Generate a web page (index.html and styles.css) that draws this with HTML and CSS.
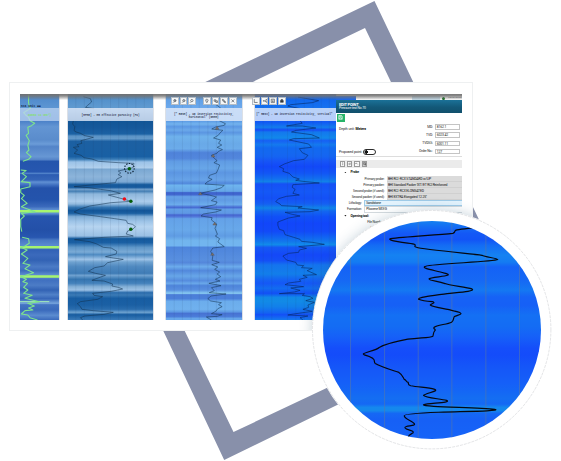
FILE: index.html
```html
<!DOCTYPE html>
<html lang="en">
<head>
<meta charset="utf-8">
<title>Well log viewer</title>
<link rel="stylesheet" href="styles.css">
</head>
<body>
<main class="stage">
  <svg class="frame" viewBox="0 0 561 461"><path fill="#8890aa" fill-rule="evenodd" d="M374.500 1 L524 313.800 L224.200 460 L75.300 144.300Z M365 28 L499 306.800 L233.500 432 L100 155.400Z"/></svg>

  <section class="window">
    <div class="screen">
      <div class="track gamma">
        <svg class="log" viewBox="56 282 110 678" preserveAspectRatio="none" data-stops="282 #4a86ca,322 #5d95d2,362 #4a80c8,380 #6395d3,420 #5a8ccc,432 #6b9cd8,440 #5384c8,470 #6797d4,479 #5584c8,484 #2455ac,516 #2757b0,520 #5486cc,524 #2c5cb2,540 #3565b8,546 #6090d4,556 #3c6cbe,564 #2452aa,600 #2454ac,620 #3b6abc,628 #5b8cd0,641 #5b8cd0,648 #2755ae,690 #2350a8,712 #2857b0,720 #4878c4,736 #5a8bd0,750 #3262b6,765 #3b6abc,780 #3262b4,800 #4b7bc6,812 #3c6cbc,826 #6090d2,840 #4070c0,856 #4c7cc6,870 #3262b4,884 #5081c8,896 #3666b8,910 #76a4dc,914 #4474c2,930 #3a6abc,946 #5b8cd0,960 #3a6abc">
          <path class="bars" d="M56 634H166M56 742H166M56 829.500H166"/><path class="bar-pale" d="M56 905H138"/>
          <path class="green" d="M80 282V310L85 325 78 330 66 338 72 345 80 352 84 362 97 370 88 377 78 382 80 400 73 406 82 422 78 436 81 450 74 458 87 470 80 478 64 484M58 510 73 512 62 520 74 530 60 545 84 548 84 560 58 567 58 578 68 586 60 596 76 610 60 620 98 635 60 640 68 648 58 658 58 680 61 695M62 712 80 716 82 730 70 738 58 742 76 750 60 762 78 775 64 790 84 795 70 806 94 818 58 830 74 838 64 845 77 850 66 862 78 870 66 880 90 886 70 895 110 905 78 910 96 918 80 924 92 930 70 932 60 942 78 945 84 953 105 960"/>
        </svg>
        <p class="label top">Sta unit ■■</p>
        <p class="head">Gamma to 150°)</p>
      </div>

      <div class="track porosity">
        <svg class="log" viewBox="189 282 239 678" preserveAspectRatio="none" data-stops="282 #4a8ac8,322 #5f9ad0,362 #115596,385 #16599c,402 #1b62a4,408 #5b93c6,416 #6299ca,424 #1c60a2,470 #1960a4,478 #3c7eb8,486 #9cc3e8,503 #b0cfec,508 #7ba8d2,530 #8cb4da,546 #7ba8d4,554 #165a9c,562 #175a9e,568 #719fcb,574 #4781b6,582 #8eb7dc,604 #abccec,612 #92bade,622 #3576b2,632 #125598,640 #1b60a2,650 #7eacd6,665 #9fc5e8,680 #b6d4f0,708 #9ac0e4,716 #155a9c,728 #1b60a4,742 #5f97c9,756 #7babd6,764 #4f8bc2,778 #9fc4e8,786 #6fa2d0,800 #4f89c0,820 #3f7cb6,826 #70a2d0,838 #3575b0,850 #4482bc,860 #83afd6,870 #9cc2e6,878 #2a6cac,885 #3b7bb6,895 #175da2,915 #1b60a4,928 #2a6dae,937 #6ea2d0,944 #175ca0,960 #3b7bb8">
          <path class="grid" d="M211 282V960M235 282V960M260 282V960M284 282V960M308 282V960M331 282V960M355 282V960M379 282V960M403 282V960"/>
          <path class="line soft" d="M232 290 252 296 255 306 244 316 238 322 262 326M204 362 202 372 208 380 206 392 212 396 224 400 236 407 260 412 240 418 225 422 228 430 214 434 220 440 204 442 216 450 206 460 226 466 234 473 256 477 274 484 330 488 374 490 371 503 330 513 337 519 330 524 340 530 326 537 322 548 262 554 206 560 248 563 280 568 308 572 336 580 302 585 326 592 347 598 365 604 310 608 250 618 220 628 206 636 224 642 280 650 320 656 352 661 356 670 370 673 378 680 370 688 356 693 352 702 372 708 290 712 207 719 250 725 270 732 288 742 310 744 326 754 324 762 294 770 316 774 344 778 300 788 290 798 264 803 246 814 266 820 294 826 268 836 256 841 290 843 314 852 312 858 330 862 342 867 310 874 258 880 262 886 286 890 272 898 224 905 215 911 224 920 228 928 260 932 316 937 290 943 236 948 224 953 230 960"/>
          <ellipse class="halo" cx="361" cy="505" rx="13.500" ry="14.500"/>
          <g fill="#055d0b"><ellipse cx="361" cy="506" rx="5" ry="5.300"/><ellipse cx="365" cy="604" rx="5" ry="5.300"/><ellipse cx="365" cy="688" rx="5" ry="5.300"/></g><ellipse cx="347" cy="597" rx="5" ry="5.300" fill="#f20c13"/>
        </svg>
        <p class="head">[MPHE] - HR effective porosity (PU)</p>
      </div>

      <div class="track horizontal">
        <svg class="log" viewBox="463 282 212 678" preserveAspectRatio="none" data-stops="282 #5a9be2,322 #6ba8ec,364 #5f9ee6,372 #73b3ee,380 #5b98e4,390 #6ba9ea,398 #5b96e2,410 #6fb2ec,432 #69a9e8,446 #6cacea,458 #4f83da,475 #5286dc,484 #609ce4,505 #68a6e8,518 #5c96e2,540 #67a3e8,550 #5188dc,556 #6eb4ee,574 #65a6e8,578 #3d61cc,584 #4268d0,590 #65a0e8,600 #609be4,614 #6cacec,622 #4668d2,628 #619ee6,640 #5f98e4,645 #4564d0,651 #547cdc,656 #64a2e8,690 #68a8ea,708 #5f9ce4,722 #72b5ee,737 #72b5f0,742 #4e85dc,780 #588fdf,788 #5487db,800 #6cacec,812 #5288dc,828 #67a6e8,842 #568cde,850 #6aa8ea,857 #4e84da,870 #588fe0,880 #8accf2,884 #4b7dd8,896 #4b80da,904 #6cadec,928 #70b1ee,936 #5c98e4,940 #4772d2,950 #4b7dda,955 #66a6ea,960 #66a6ea">
          <path class="grid" d="M486 282V960M509 282V960M533 282V960M556 282V960M580 282V960M604 282V960M628 282V960M651 282V960"/>
          <path class="line soft" d="M601 290 610 303 603 314 616 324M612 362 629 371 626 376 602 381 591 387 622 391 614 399 609 406 596 414 616 420 610 430 619 435 606 442 621 449 610 454 605 460 590 466 598 475 606 482 597 488 613 495 608 510 604 519 585 526 582 534 592 538 578 546 572 552 626 556 618 563 600 570 575 576 558 580 584 585 604 591 590 602 606 606 601 614 560 623 618 630 602 636 568 642 561 648 592 653 590 660 605 672 600 685 607 703 601 708 613 716 608 726 626 740 594 744 588 754 594 768 592 781 612 787 591 794 608 801 599 808 613 816 606 822 616 830 601 838 614 843 583 850 617 857 590 863 598 872 584 878 631 882 589 888 580 896 588 903 618 908 610 914 620 920 608 926 602 934 590 941 620 944 606 949 576 951 590 960"/>
          <path class="marks" d="M601 388 606 379 611 388ZM590 471 595 463 600 471ZM554 584 559 576 564 584ZM594 675 599 667 604 675ZM588 766 593 758 598 766Z"/>
        </svg>
        <p class="head">[" RESH] - UG inversion resistivity,<br>horizontal" (OHMM)</p>
      </div>

      <div class="track vertical">
        <svg class="log" viewBox="712 282 227 678" preserveAspectRatio="none" data-stops="282 #0d60ec,322 #1470f0,366 #1158f4,382 #147cec,390 #164cf4,396 #1378ee,414 #1288ea,422 #1760f4,434 #147aee,444 #1268f0,458 #1468f0,470 #1564f2,484 #1654f6,500 #1248f8,520 #1256f5,536 #126ef0,545 #1282e8,552 #1650f6,575 #1458f6,595 #1450f6,612 #1560f2,624 #1184e8,634 #1366f0,650 #1050f7,670 #1246fa,694 #124af8,712 #1164f2,725 #1278ec,734 #118bea,742 #1558f4,765 #1448f8,782 #1450f6,795 #1474ee,822 #127eea,838 #1464f2,850 #1558f6,865 #126cf0,880 #1250f6,892 #1188e8,904 #128ae6,920 #1280ea,938 #1364f2,944 #1450f6,960 #147aee">
          <path class="grid" d="M735 282V960M759 282V960M803 282V960M826 282V960M850 282V960M874 282V960M897 282V960M920 282V960"/>
          <path class="line" d="M832 291 890 302 872 308 812 314 804 318 838 326M838 362 844 370 800 378 844 378 882 384 828 391 814 396 870 404 892 414 820 416 808 420 862 432 870 442 836 446 844 458 860 466 850 478 820 482 794 492 780 500 792 506 790 514 808 520 818 531 836 537 826 541 846 544 892 549 818 554 816 562 824 568 818 580 836 585 800 589 778 596 770 605 782 612 786 617 844 620 832 624 890 630 866 635 796 637 816 643 838 648 806 654 776 666 776 676 780 688 792 692 796 704 820 712 838 718 842 724 872 727 906 733 834 740 856 745 836 750 834 757 806 760 790 768 800 780 826 787 830 795 848 797 842 803 872 805 858 812 884 824 846 826 858 832 836 838 840 844 806 849 796 854 848 860 812 864 838 871 822 876 780 881 850 881 844 886 866 890 874 895 854 902 878 907 860 915 862 922 846 928 872 934 820 942 804 945 860 948 838 953 846 960"/>
        </svg>
        <p class="head">[" RESV] - UG inversion resistivity, vertical"</p>
      </div>

      <div class="corner"><i class="sky"></i><i class="sky b"></i><b></b><em>reference</em></div>
      <div class="shade"></div>
      <div class="tools">
        <span><svg viewBox="0 0 8 8"><path d="M3 5 1.500 6.500M3 5A1.700 1.700 0 1 0 3 2.200 2 2 0 0 0 3 5ZM3.300 3.600H5.300M4.300 2.600V4.600"/></svg></span>
        <span><svg viewBox="0 0 8 8"><path d="M3 5 1.500 6.500M3 5A1.700 1.700 0 1 0 3 2.200 2 2 0 0 0 3 5ZM3.300 3.600H5.300"/></svg></span>
        <span><svg viewBox="0 0 8 8"><path d="M3 5 1.500 6.500M3 5A1.700 1.700 0 1 0 3 2.200 2 2 0 0 0 3 5Z"/></svg></span>
        <span class="gap"><svg viewBox="0 0 8 8"><path d="M4 6.500 2.500 4A1.700 1.700 0 1 1 5.500 4ZM3.500 3H4.500"/></svg></span>
        <span><svg viewBox="0 0 8 8"><path d="M1.500 2.500H4V4.500H1.500ZM4 4H6.500V6.200H4Z"/></svg></span>
        <span><svg viewBox="0 0 8 8"><path d="M2 1.800 4 2.500 4.500 4.500 2.500 4ZM4.300 4.300 6.300 5V6.500L4.500 6Z"/></svg></span>
        <span><svg viewBox="0 0 8 8"><path d="M2 2 6 6M6 2 2 6"/></svg></span>
        <span class="gap2"><svg viewBox="0 0 8 8"><path d="M1.800 1.500V6.200H6.500"/></svg></span>
        <span><svg viewBox="0 0 8 8"><path d="M1.500 4H3.500L6.500 2.200M3.500 4 6.500 5.800M5.500 2.200H6.500V3.200M5.500 5.800H6.500V4.800M2 3.300V4.700"/></svg></span>
        <span><svg viewBox="0 0 8 8"><path d="M1.800 1.600H6.200V6.400H1.800ZM4 2.600V5M3 4.200 4 5.200 5 4.200"/></svg></span>
        <span><svg viewBox="0 0 8 8"><path fill="#333" d="M2 3.500H6V6H2ZM3 2H5V3.500H3Z"/></svg></span>
      </div>

      <aside class="panel">
        <header><strong>EDIT POINT</strong><span>Pressure test No 70</span></header>
        <div class="save"><svg viewBox="0 0 8 8"><path d="M2 1.800H5.400L6.200 2.600V6.200H2ZM3 2V3.200H5V2M3 6V4.500H5.200V6"/></svg></div>
        <div class="point">
          <div class="left"><p>Depth unit: <b>Meters</b></p><p class="switch">Proposed point: <i></i></p></div>
          <div class="right">
            <label>MD: <span>8162.1</span></label><label>TVD: <span>6023.42</span></label><label>TVDSS: <span>6001.11</span></label><label>Order No.: <span>127</span></label>
          </div>
        </div>
        <div class="bar">
          <i><svg viewBox="0 0 6 6"><path d="M2.500 1H3.500M3 1V5M2.300 5H3.700"/></svg></i><i><svg viewBox="0 0 6 6"><path d="M1 3.500 3.200 1.300 5 3 3 5H2ZM2 2.500 4 4"/></svg></i><i><svg viewBox="0 0 6 6"><path d="M1 2.500H3.500L5 4.500M2 1.500 1 2.500 2 3.500"/></svg></i><i class="wide"><svg viewBox="0 0 6 6"><path d="M1 1H4.500V4.500H1ZM1 2.200H4.500M3.500 3.500H5.500V5.500H3.500Z"/></svg></i>
        </div>
        <h3><u></u>Probe</h3>
        <dl>
          <dt>Primary probe:</dt><dd>BHI RCI -RCX STANDARD w/LIP</dd>
          <dt>Primary packer:</dt><dd>BHI Standard Packer 'IXT/ET RCI Reinforced</dd>
          <dt>Second probe (if used):</dt><dd>BHI RCI -RCX ELONGATED</dd>
          <dt>Second packer (if used):</dt><dd>BHI EXTRA Elongated 12.25"</dd>
        </dl>
        <dl class="pick">
          <dt>Lithology:</dt><dd class="on">Sandstone</dd>
          <dt>Formation:</dt><dd>Pliocene MIX-G</dd>
        </dl>
        <h3><u></u>Opening tool:</h3>
        <dl class="files"><dt>File Number:</dt><dd></dd><dt>Start date:</dt><dd></dd></dl>
      </aside>
    </div>
    <div class="glow"></div>
  </section>

  <div class="lens">
    <svg class="ring" viewBox="0 0 240 240"><circle cx="120" cy="120" r="119.500"/></svg>
    <div class="glass">
      <svg class="log" viewBox="903 662 609 655" preserveAspectRatio="none" data-stops="662 #1480f0,680 #146cf4,700 #1458f6,718 #1254f6,735 #146cf4,765 #1582f2,785 #147cf2,800 #1462f6,840 #1668f4,870 #1478f2,890 #1662f6,915 #1660f6,945 #1470f4,980 #146cf4,1010 #1660f8,1045 #154efa,1065 #144cfa,1100 #1556f8,1150 #1560f8,1172 #1466f5,1195 #146ef2,1212 #1568f4,1222 #1588ee,1232 #1588ec,1240 #1568f4,1260 #1660f6,1317 #1664f8">
        <path class="ruler" d="M980 662V1317M1075 662V1317M1169 662V1317M1263 662V1317M1358 662V1317M1452 662V1317"/>
        <path class="trace" d="M1325 682C1305 686 1285 686 1273 690C1269 694 1274 696 1266 699C1220 704 1130 710 1092 715C1084 718 1096 721 1112 724C1134 729 1156 729 1160 733C1163 736 1155 738 1164 741C1180 747 1310 760 1347 765C1356 771 1390 773 1391 778C1380 785 1210 790 1190 798C1172 804 1220 811 1240 818C1284 828 1202 829 1199 836C1201 842 1222 842 1244 850C1255 856 1302 860 1319 866C1332 874 1272 877 1250 880C1220 885 1168 891 1170 897C1178 901 1190 903 1208 904C1222 908 1201 911 1203 915C1208 921 1244 925 1268 932C1306 941 1282 943 1270 949C1266 956 1269 961 1262 966C1250 973 1220 974 1213 982C1210 986 1220 987 1215 992C1211 996 1212 1002 1210 1008C1202 1013 1180 1012 1140 1017C1110 1023 1077 1032 1060 1042C1052 1050 1023 1056 1016 1061C1013 1065 1038 1068 1044 1077C1049 1081 1044 1086 1049 1090C1065 1100 1090 1108 1115 1117C1126 1124 1127 1134 1130 1138C1138 1141 1133 1144 1141 1147C1143 1151 1138 1154 1148 1157C1170 1161 1200 1163 1213 1167C1232 1173 1188 1179 1184 1186C1188 1193 1230 1196 1248 1201C1266 1208 1196 1209 1184 1214C1178 1221 1330 1222 1383 1228C1404 1233 1300 1234 1240 1236C1195 1238 1130 1240 1130 1247C1130 1257 1154 1263 1158 1271C1164 1279 1131 1276 1132 1283C1136 1291 1160 1291 1154 1299C1148 1303 1140 1305 1142 1312"/>
      </svg>
    </div>
  </div>
</main>
<script src="script.js"></script>
</body>
</html>
```
FILE: styles.css
```css
* { box-sizing: border-box; }
body { margin: 0; background: #fff; overflow: hidden; font-family: Roboto, "Liberation Sans", sans-serif; }
p, h3, dl, dd { margin: 0; }
i, em { font-style: normal; }
svg { display: block; }

.stage { position: relative; width: 561px; height: 461px; padding: 82.300px 0 0 9px; overflow: hidden; }
.frame { position: absolute; left: 0; top: 0; width: 561px; height: 461px; }

.window { position: relative; width: 463.700px; height: 248.500px; padding: 10.700px 10px; background: #fff; border: 1px solid #eef0f1; overflow: hidden; }
.screen { position: relative; display: flex; width: 441.700px; height: 226px; overflow: hidden; background: #fff; }

.track { position: relative; flex: none; height: 226px; }
.gamma { width: 39.300px; }
.porosity { width: 85.300px; margin-left: 8.700px; }
.horizontal { width: 75.800px; margin-left: 12.600px; }
.vertical { width: 81.200px; margin-left: 13px; }
.gamma, .porosity, .horizontal, .vertical { box-shadow: 0 0 0 1px #dce0e6; }
.log { width: 100%; height: 100%; }
.log path { fill: none; vector-effect: non-scaling-stroke; stroke-linejoin: round; }
.log .grid { stroke: #2c4260; stroke-opacity: .13; stroke-width: .7px; }
.log .line { stroke: #06245c; stroke-opacity: .8; stroke-width: .7px; }
.log .soft { stroke: #12304c; stroke-opacity: .75; }
.log .green { stroke: #7fe48c; stroke-width: 1.100px; }
.log .bars { stroke: #a6f56f; stroke-width: 2.500px; }
.log .bar-pale { stroke: #a5efb8; stroke-width: 1px; }
.log .marks { fill: #77706e; stroke: #5a5350; stroke-width: .4px; }
.halo { fill: none; stroke: #0d2135; stroke-width: 1.100px; stroke-dasharray: 1.400 1.300; vector-effect: non-scaling-stroke; }
.head { position: absolute; left: 0; right: 0; top: 14px; height: 13px; display: flex; flex-direction: column; align-items: center; justify-content: center; background: rgba(226, 235, 250, .8); font: bold 2.770px/3.300px "Liberation Mono", monospace; color: #39435a; text-align: center; white-space: nowrap; padding-top: 2.400px; }
.horizontal .head { display: block; padding-top: 4.800px; }
.gamma .head { color: #86df74; background: rgba(190, 212, 242, .75); }
.vertical .head { align-items: flex-start; padding: .6px 0 0 1.500px; }
.label { position: absolute; left: 1px; top: 11px; font: bold 3px/4px "Liberation Mono", monospace; color: #12294a; white-space: nowrap; }

.tools { position: absolute; left: 151.200px; top: 3px; display: flex; gap: .9px; }
.tools span { width: 7.700px; height: 7.800px; background: #f5f7f8; border: .4px solid #b4bcc4; }
.tools .gap { margin-left: 6.200px; }
.tools .gap2 { margin-left: 14.800px; }
.tools svg { width: 100%; height: 100%; fill: none; stroke: #444a50; stroke-width: .9; }

.corner { position: absolute; left: 315.700px; top: 2px; right: 0; height: 5px; display: flex; align-items: center; background: #fff; }
.sky { width: 21px; height: 100%; background: #1766ee; }
.sky.b { width: 29px; margin-left: 56px; background: #c4dbe9; }
.corner b { width: 3.800px; height: 3.800px; border-radius: 50%; background: #10701c; margin-left: 2px; }
.corner em { font: bold 2.500px/4px "Liberation Mono", monospace; color: #555; margin-left: 3px; }

.panel { position: absolute; left: 315.700px; right: 0; top: 6.400px; bottom: 0; background: #fff; font-size: 3.400px; line-height: 4px; letter-spacing: -.16px; color: #222; white-space: nowrap; }
.panel b { color: #000; }
.panel header { height: 13px; padding: 2.600px 3.300px 0; background: linear-gradient(#1b7198, #135878 55%, #10506c); color: #fff; display: flex; flex-direction: column; }
.panel strong { font-size: 4px; line-height: 4px; letter-spacing: -.16px; }
.panel header span { line-height: 3.800px; color: #f2f8fb; }
.save { width: 8px; height: 8.400px; margin: .4px 0 0 1px; background: #27b469; padding: .6px; }
.save svg { width: 100%; fill: none; stroke: #fff; stroke-width: .7; }
.point { display: flex; justify-content: space-between; height: 34.500px; padding: 2.200px 1.500px 0 3.300px; border-bottom: .6px solid #ddd; }
.left { padding-top: 2.200px; display: flex; flex-direction: column; gap: 18.800px; font-size: 3.500px; letter-spacing: -.1px; }
.switch { display: flex; align-items: center; }
.switch i { width: 13px; height: 5.600px; margin-left: .5px; border: .6px solid #2b2b2b; border-radius: 3px; background: radial-gradient(circle at 2.200px 50%, #111 1.500px, #fff 1.900px); }
.right { display: flex; flex-direction: column; gap: 2.500px; align-items: flex-end; }
.right label { display: flex; align-items: center; gap: 2px; }
.right span { width: 25.500px; height: 5.600px; border: .5px solid #c4c4c4; padding-left: 1px; line-height: 5px; }
.bar { display: flex; gap: 2px; height: 8.500px; margin-top: 3.300px; padding: 1.400px 4px; background: #ebebeb; }
.bar i { width: 5.400px; height: 5.600px; border: .4px solid #999; background: #f8f8f8; }
.bar .wide { background: #ccc; }
.bar svg { width: 100%; fill: none; stroke: #333; stroke-width: .6; }
.panel h3 { display: flex; align-items: center; height: 6.400px; padding: 0 0 0 8.500px; font-size: 3.400px; line-height: 6.400px; color: #111; }
.panel u { width: 2.400px; height: 1.800px; margin-right: 4px; background: #222; clip-path: polygon(0 0, 100% 0, 50% 100%); }
.panel h3:nth-of-type(1) { margin-top: .8px; }
.panel dl { display: grid; grid-template-columns: 48.700px 1fr; grid-auto-rows: 6.100px; column-gap: 2.500px; line-height: 6px; }
.panel dt { text-align: right; }
.panel dd { background: #dbdbdb; border-bottom: .4px solid #d0d0d0; padding-left: 1px; color: #111; }
.panel .pick { grid-template-columns: 26px 1fr; padding-top: .3px; }
.panel .pick dd { background: #fff; border: .5px solid #d4dade; border-right: 0; line-height: 5.200px; }
.panel .pick dd.on { background: #e3f3fd; border-color: #9fcbe8; }
.panel .files dd { background: #fff; border: .4px solid #ccc; }
.shade { position: absolute; left: 0; right: 0; top: 0; height: 6px; background: linear-gradient(rgba(112, 112, 112, .95) 0, rgba(116, 116, 116, .85) 30%, rgba(140, 140, 140, 0)); }

.glow { position: absolute; left: 303.300px; top: 128px; width: 239px; height: 239px; border-radius: 50%; box-shadow: 0 0 14px rgba(50, 95, 125, .32); }
.lens { position: absolute; left: 312.300px; top: 210.300px; width: 239.400px; height: 239.400px; padding: 10.700px; border-radius: 50%; background: #fff; }
.ring { position: absolute; left: 0; top: 0; width: 100%; height: 100%; fill: none; stroke: #c6c9cc; stroke-width: .5; stroke-dasharray: 3 1; }
.glass { width: 218px; height: 218px; border-radius: 50%; overflow: hidden; }
.log .ruler { stroke: #5878a8; stroke-opacity: .65; stroke-width: .9px; }
.log .trace { stroke: #05080f; stroke-width: 1.200px; stroke-linecap: round; }
```
FILE: script.js
```js
// Paints each log's depth bands from its "depth colour" stop list.
document.querySelectorAll("svg[data-stops]").forEach((svg) => {
  const [, top, , height] = svg.getAttribute("viewBox").split(" ").map(Number);
  const stops = svg.dataset.stops.split(",").map((s) => {
    const [y, color] = s.split(" ");
    return `${color} ${((y - top) / height * 100).toFixed(2)}%`;
  });
  svg.style.background = `linear-gradient(${stops.join(",")})`;
});
```
